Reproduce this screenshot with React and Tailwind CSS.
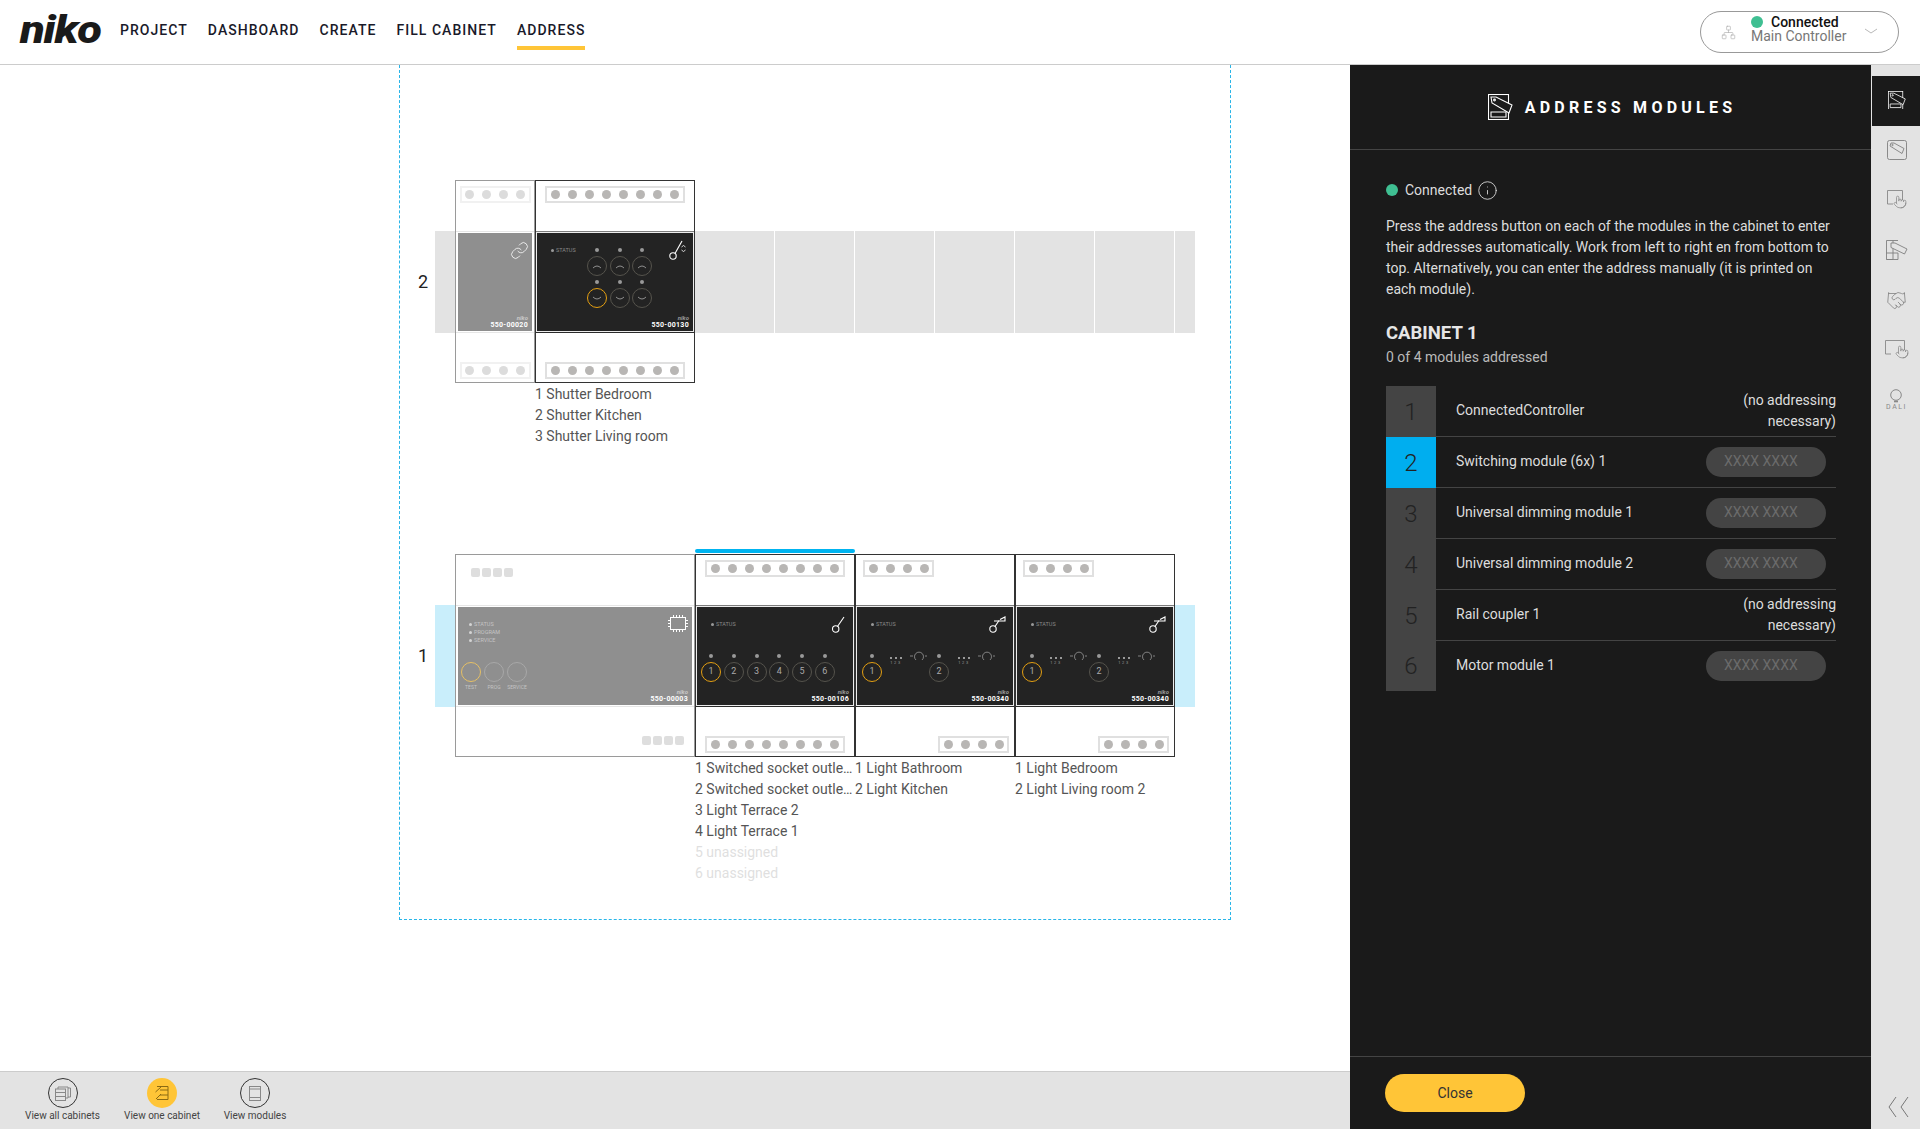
import React from "react";
import { Network, Link, Info, Handshake, Pointer } from "lucide-react";

const Pins = ({ n, faded }) => (
  <div className={`flex items-center justify-center gap-[8px] h-[17px] border-2 bg-white ${n === 8 ? "w-[140px]" : "w-[71px]"} ${faded ? "border-[#f1f1f1]" : "border-[#e0e0e0]"}`}>
    {Array.from({ length: n }).map((_, i) => (
      <span key={i} className={`w-[9px] h-[9px] rounded-full ${faded ? "bg-[#dcdcdc]" : "bg-[#b8b6b4]"}`} />
    ))}
  </div>
);

const Blocks = () => (
  <div className="flex gap-[2px]">
    {[0, 1, 2, 3].map((i) => (
      <span key={i} className="w-[9px] h-[9px] rounded-[2px] bg-[#dedede]" />
    ))}
  </div>
);

const KeyIcon = ({ kind }) => (
  <svg width="20" height="22" viewBox="0 0 20 22" fill="none" stroke="#fff" strokeWidth="1.1" className="absolute right-[5px] top-[7px]">
    {kind === "dim" && (
      <>
        <circle cx="5" cy="15" r="3.2" />
        <path d="M7 12.5 L11 6.5" />
        <path d="M6 7 H17 V3 L12 5.5" />
      </>
    )}
    {kind === "shutter" && (
      <>
        <circle cx="5" cy="16" r="3.2" />
        <path d="M7 13.5 L14 1" />
        <path d="M13.5 7 l2 -1.5 l2 1.5 M13.5 10 l2 1.5 l2 -1.5" strokeWidth="0.8" />
      </>
    )}
    {!kind && (
      <>
        <circle cx="7.7" cy="15" r="3.2" />
        <path d="M9.5 12.5 L16 3" />
      </>
    )}
  </svg>
);

const Chip = () => (
  <svg width="20" height="18" viewBox="0 0 20 18" fill="none" stroke="#fff" strokeWidth="1" className="absolute right-[4px] top-[8px]">
    <rect x="2.5" y="2.5" width="15" height="12" />
    <path d="M5.5 2.5V0 M8.5 2.5V0 M11.5 2.5V0 M14.5 2.5V0 M5.5 14.5V17 M8.5 14.5V17 M11.5 14.5V17 M14.5 14.5V17 M2.5 5.5H0 M2.5 8.5H0 M2.5 11.5H0 M17.5 5.5H20 M17.5 8.5H20 M17.5 11.5H20" />
  </svg>
);

const Chev = ({ up }) => (
  <svg width="10" height="5" viewBox="0 0 10 5" fill="none" stroke="#aaa" strokeWidth="0.8">
    <path d={up ? "M1 4 Q5 0 9 4" : "M1 1 Q5 5 9 1"} />
  </svg>
);

const Btn = ({ active, label, chev, grey, led = true, className = "" }) => (
  <div className={`w-5 flex flex-col items-center gap-[4px] ${className}`}>
    {led && <span className="w-[4px] h-[4px] rounded-full bg-[#999]" />}
    <span
      className={`w-5 h-5 rounded-full flex items-center justify-center text-[9px] text-[#aaa] ${
        active
          ? grey
            ? "border border-[#e6c065]"
            : "border-[1.5px] border-[#e39f12]"
          : grey
          ? "border border-[#a8a8a8]"
          : "border border-[#55534c]"
      }`}
    >
      {chev ? <Chev up={chev === "up"} /> : label}
    </span>
  </div>
);

const Status = ({ text, className = "", light }) => (
  <div className={`flex items-center gap-[2px] text-[5.5px] leading-[8px] ${light ? "text-[#c4c4c4]" : "text-[#888]"} ${className}`}>
    <span className={`w-[3px] h-[3px] rounded-full ${light ? "bg-[#d4d4d4]" : "bg-[#999]"}`} />
    <span>{text}</span>
  </div>
);

const Brand = ({ code, light }) => (
  <div className="absolute right-[4px] bottom-[2px] text-right">
    <div className={`italic font-bold text-[6px] leading-[7px] ${light ? "text-[#c9c9c9]" : "text-[#999]"}`}>niko</div>
    <div className="text-[7px] leading-[8px] font-bold tracking-[0.3px] text-white">{code}</div>
  </div>
);

const Dim = () => (
  <svg width="20" height="10" viewBox="0 0 20 10" fill="none" stroke="#999" strokeWidth="0.8">
    <path d="M1 5H4 M16 5h2" />
    <path d="M7 9 A4.5 4.5 0 1 1 13 9" />
  </svg>
);

const Labels = ({ items }) => (
  <div className="pt-px text-[14px] leading-[21px] text-[#555]">
    {items.map((t) => (
      <div key={t} className={`whitespace-nowrap overflow-hidden ${t.includes("unassigned") ? "text-[#dfdfdf]" : ""}`}>
        {t}
      </div>
    ))}
  </div>
);

const Module = ({ w, top, bottom, plate, labels, selected, faded, grey }) => (
  <div className={`${w} relative shrink-0`}>
    {selected && <div className="absolute left-0 right-0 -top-[5px] h-[4px] rounded-full bg-[#00b4f0]" />}
    <div className={`h-[203px] border ${faded ? "border-[#9a9a9a]" : "border-[#333]"}`}>
      <div className="h-[50px]">{top}</div>
      {grey ? (
        <div className="h-[102px] border-y border-[#e6e6e6] bg-white px-[2px] py-px">
          <div className="relative h-full w-full bg-[#8f8f8f]">{plate}</div>
        </div>
      ) : (
        <div className="h-[102px] border-y border-t-[#7d7d7d] border-b-[#2a2a2a] bg-[#ececec] p-[1px]">
          <div className="relative h-full w-full bg-[#232323]">{plate}</div>
        </div>
      )}
      <div className="h-[49px]">{bottom}</div>
    </div>
    {labels && <Labels items={labels} />}
  </div>
);

const Cap = ({ blue }) => (
  <div className={`w-5 h-[102px] mt-[51px] shrink-0 ${blue ? "bg-[#c9eefb]" : "bg-[#e3e3e3]"}`} />
);

const Slot = () => <div className="w-[80px] h-[102px] mt-[51px] shrink-0 bg-[#e3e3e3] border-r border-white" />;

const Num = ({ n }) => (
  <div className="w-[35px] h-[203px] shrink-0 flex items-center pl-[18px] text-[18px] text-[#222]">{n}</div>
);

const Rail2 = () => (
  <div className="flex items-start">
    <Num n="2" />
    <Cap />
    <Module
      w="w-[80px]"
      faded
      grey
      top={<div className="pt-[5px] flex justify-center"><Pins n={4} faded /></div>}
      bottom={<div className="pt-[29px] flex justify-center"><Pins n={4} faded /></div>}
      plate={
        <>
          <Link size={19} strokeWidth={1} color="#fff" className="absolute right-[3px] top-[8px]" />
          <Brand code="550-00020" light />
        </>
      }
    />
    <Module
      w="w-[160px]"
      labels={["1 Shutter Bedroom", "2 Shutter Kitchen", "3 Shutter Living room"]}
      top={<div className="pt-[5px] flex justify-center"><Pins n={8} /></div>}
      bottom={<div className="pt-[29px] flex justify-center"><Pins n={8} /></div>}
      plate={
        <>
          <Status text="STATUS" className="absolute left-[14px] top-[13px]" />
          <div className="absolute left-[50px] top-[15px] flex gap-[2.5px]">
            {[0, 1, 2].map((i) => <Btn key={i} chev="up" />)}
          </div>
          <div className="absolute left-[50px] top-[47px] flex gap-[2.5px]">
            <Btn chev="down" active />
            <Btn chev="down" />
            <Btn chev="down" />
          </div>
          <KeyIcon kind="shutter" />
          <Brand code="550-00130" />
        </>
      }
    />
    {[0, 1, 2, 3, 4, 5].map((i) => <Slot key={i} />)}
    <Cap />
  </div>
);

const DimInfo = ({ w }) => (
  <div className={`${w} flex justify-end items-start gap-[7px] text-[#999]`}>
    <div className="flex flex-col items-center">
      <div className="flex gap-[3px] mt-[3px]">
        {[0, 1, 2].map((i) => <span key={i} className="w-[2px] h-[2px] bg-[#999]" />)}
      </div>
      <div className="text-[4px] leading-[7px] tracking-[1.6px]">123</div>
    </div>
    <div className="-mt-[3px]"><Dim /></div>
  </div>
);

const DimPlate = ({ code }) => (
  <>
    <Status text="STATUS" className="absolute left-[14px] top-[13px]" />
    <div className="absolute left-[5px] top-[47px] flex">
      <Btn label="1" active />
      <DimInfo w="w-[47px]" />
      <Btn label="2" />
      <DimInfo w="w-[48px]" />
    </div>
    <KeyIcon kind="dim" />
    <Brand code={code} />
  </>
);

const Rail1 = () => (
  <div className="flex items-start">
    <Num n="1" />
    <Cap blue />
    <Module
      w="w-[240px]"
      faded
      grey
      top={<div className="pt-[13px] pl-[15px]"><Blocks /></div>}
      bottom={<div className="pt-[29px] pr-[10px] flex justify-end"><Blocks /></div>}
      plate={
        <>
          <div className="absolute left-[11px] top-[13px] flex flex-col">
            <Status text="STATUS" light />
            <Status text="PROGRAM" light />
            <Status text="SERVICE" light />
          </div>
          <div className="absolute left-[3px] top-[55px] flex gap-[3px]">
            {["TEST", "PROG", "SERVICE"].map((t, i) => (
              <div key={t} className="w-5 flex flex-col items-center">
                <Btn grey led={false} active={i === 0} />
                <span className="text-[5px] leading-[8px] mt-[1px] text-[#c4c4c4]">{t}</span>
              </div>
            ))}
          </div>
          <Chip />
          <Brand code="550-00003" light />
        </>
      }
    />
    <Module
      w="w-[160px]"
      selected
      labels={["1 Switched socket outle…", "2 Switched socket outle…", "3 Light Terrace 2", "4 Light Terrace 1", "5 unassigned", "6 unassigned"]}
      top={<div className="pt-[5px] flex justify-center"><Pins n={8} /></div>}
      bottom={<div className="pt-[29px] flex justify-center"><Pins n={8} /></div>}
      plate={
        <>
          <Status text="STATUS" className="absolute left-[14px] top-[13px]" />
          <div className="absolute left-[4px] top-[47px] flex gap-[2.75px]">
            {[1, 2, 3, 4, 5, 6].map((i) => <Btn key={i} label={i} active={i === 1} />)}
          </div>
          <KeyIcon />
          <Brand code="550-00106" />
        </>
      }
    />
    {[
      { code: "550-00340", labels: ["1 Light Bathroom", "2 Light Kitchen"] },
      { code: "550-00340", labels: ["1 Light Bedroom", "2 Light Living room 2"] },
    ].map((m) => (
      <Module
        key={m.labels[0]}
        w="w-[160px]"
        labels={m.labels}
        top={<div className="pt-[5px] pl-[7px]"><Pins n={4} /></div>}
        bottom={<div className="pt-[29px] pr-[5px] flex justify-end"><Pins n={4} /></div>}
        plate={<DimPlate code={m.code} />}
      />
    ))}
    <Cap blue />
  </div>
);

const AddressIcon = ({ size = 25, color = "#fff", bg = "#1a1a1a" }) => (
  <svg width={size} height={size * 1.04} viewBox="0 0 25 26" fill="none" stroke={color} strokeWidth="1.1">
    <rect x="0.5" y="0.5" width="20" height="25" />
    <path d="M3 18H18 V23 H3 Z" />
    <path d="M3 3 H8 L24 11 L21 19 L4 9 Z" fill={bg} />
    <circle cx="6.5" cy="6" r="0.9" />
  </svg>
);

const TagIcon = () => (
  <svg width="20" height="20" viewBox="0 0 20 20" fill="none" stroke="#808080" strokeWidth="0.9">
    <rect x="0.5" y="0.5" width="19" height="19" rx="2" />
    <path d="M4 3 H7 L17 8.5 L15 13.5 L3 6 Z" />
    <circle cx="5.5" cy="5" r="0.7" />
  </svg>
);

const TouchIcon = ({ w = 16 }) => (
  <svg width={w + 4} height="20" viewBox={`0 0 ${w + 4} 20`} fill="none" stroke="#888" strokeWidth="0.9">
    <path d={`M6 14 H0.5 V0.5 H${w - 0.5} V10`} />
    <Pointer x={w - 10} y="4" width="14" height="16" strokeWidth="1.3" color="#888" />
  </svg>
);

const TagModIcon = () => (
  <svg width="22" height="20" viewBox="0 0 22 20" fill="none" stroke="#808080" strokeWidth="0.9">
    <path d="M0.5 0.5 H7 V19.5 H0.5 Z M7 0.5 H12 M12 19.5 H0.5 M12 19.5 V13 H0.5" />
    <path d="M5 3 H9 L21 9 L18.5 14 L5 7.5 Z" fill="#e3e3e3" />
  </svg>
);

const SideTab = ({ children, active }) => (
  <div className={`h-[50px] pl-[2px] pb-[2px] flex items-center justify-center ${active ? "bg-[#1a1a1a] ml-px" : ""}`}>{children}</div>
);

const Row = ({ n, name, input, active, last }) => (
  <div className="flex">
    <div className={`w-[50px] ${last ? "h-[50px]" : "h-[51px]"} shrink-0 flex items-center justify-center text-[24px] font-light text-[#222] ${active ? "bg-[#00aeef]" : "bg-[#444]"}`}>
      {n}
    </div>
    <div className={`flex-1 flex items-center justify-between pl-5 ${last ? "" : "border-b border-[#444]"}`}>
      <span className="text-[14px] text-[#ddd] pb-[2px]">{name}</span>
      {input ? (
        <input
          readOnly
          placeholder="XXXX XXXX"
          className="w-[120px] h-[30px] mr-[10px] rounded-full bg-[#444] pl-[18px] pb-[2px] text-[14px] outline-none placeholder:text-[#6b6b6b]"
        />
      ) : (
        <span className="w-[120px] text-right text-[14px] leading-[21px] text-[#ddd]">(no addressing necessary)</span>
      )}
    </div>
  </div>
);

const CircleBtn = ({ label, active, children, w }) => (
  <div className={`${w} flex flex-col items-center`}>
    <div className={`w-[30px] h-[30px] rounded-full flex items-center justify-center ${active ? "bg-[#ffc537]" : "border border-[#333]"}`}>
      {children}
    </div>
    <span className="mt-[1px] text-[10px] leading-[14px] text-[#444] whitespace-nowrap">{label}</span>
  </div>
);

export default function App() {
  return (
    <div className="font-[family-name:Roboto,sans-serif] w-[1920px] h-[1129px] overflow-hidden flex flex-col bg-white">
      <header className="h-[65px] shrink-0 border-b border-[#ccc] flex items-center justify-between pl-[20px] pr-[21px]">
        <div className="flex items-center">
          <span className="w-[80px] text-[38px] leading-[38px] -mt-[4px] font-black italic tracking-[-1px] text-[#1a1a1a] scale-x-[1.19] origin-left">niko</span>
          <nav className="ml-[20px] -mt-[4px] flex gap-[20px] text-[14px] font-medium tracking-[1.04px] text-[#1a1a2a]">
            <span>PROJECT</span>
            <span>DASHBOARD</span>
            <span>CREATE</span>
            <span>FILL CABINET</span>
            <span className="relative">
              ADDRESS
              <span className="absolute left-0 right-0 top-[26px] h-[4px] bg-[#ffc537]" />
            </span>
          </nav>
        </div>
        <div className="w-[199px] h-[42px] rounded-full border border-[#999] flex items-center pl-[20px] pr-[20px]">
          <Network size={15} strokeWidth={1} color="#aaa" />
          <div className="ml-[15px] -mt-[7px] flex-1 text-[14px] leading-[14px]">
            <div className="flex items-center font-medium text-[#111]">
              <span className="w-3 h-3 rounded-full bg-[#3fbf92] mr-[8px]" />
              Connected
            </div>
            <div className="text-[#777]">Main Controller</div>
          </div>
          <svg width="14" height="8" viewBox="0 0 14 8" fill="none" stroke="#999" strokeWidth="0.7">
            <path d="M1 1 L7 5 L13 1" />
          </svg>
        </div>
      </header>

      <div className="flex-1 flex min-h-0">
        <div className="w-[1350px] flex flex-col">
          <main className="flex-1 min-h-0 overflow-hidden pl-[399px]">
            <div className="w-[832px] h-[855px] border-x border-b border-dashed border-[#28b5e8] pt-[115px]">
              <Rail2 />
              <div className="h-[107px]" />
              <Rail1 />
            </div>
          </main>
          <footer className="h-[58px] shrink-0 border-t border-[#ccc] bg-[#e3e3e3] pl-[25px] pt-[6px] flex gap-[24px]">
            <CircleBtn label="View all cabinets" w="w-[75px]">
              <svg width="16" height="15" viewBox="0 0 16 15" fill="none" stroke="#888" strokeWidth="1">
                <rect x="0.5" y="3" width="10" height="11.5" />
                <path d="M0.5 6.5H10.5 M0.5 10.5H10.5 M3 3V1H13V12H10.5 M13 2H15.5V11H13" />
              </svg>
            </CircleBtn>
            <CircleBtn label="View one cabinet" active w="w-[76px]">
              <svg width="14" height="14" viewBox="0 0 14 14" fill="none" stroke="#8a6a14" strokeWidth="1">
                <path d="M2 0.5H13V13.5H2 M5 4H13 M5 9H13 M0.5 6 L6 1 M1 13 L6 8" />
              </svg>
            </CircleBtn>
            <CircleBtn label="View modules" w="w-[62px]">
              <svg width="12" height="15" viewBox="0 0 12 15" fill="none" stroke="#888" strokeWidth="1">
                <rect x="0.5" y="0.5" width="11" height="14" />
                <path d="M0.5 3H11.5 M0.5 11.5H11.5" />
              </svg>
            </CircleBtn>
          </footer>
        </div>

        <aside className="w-[521px] bg-[#1a1a1a] flex flex-col">
          <div className="h-[85px] shrink-0 border-b border-[#444] flex items-center justify-center gap-[12px] pl-[3px]">
            <AddressIcon />
            <h1 className="mt-px text-[16px] font-bold tracking-[4.25px] text-white">ADDRESS MODULES</h1>
          </div>
          <div className="flex-1 pl-[36px] pr-[35px] pt-[30px] text-[#ddd]">
            <div className="h-5 flex items-center text-[14px]">
              <span className="w-3 h-3 rounded-full bg-[#3fbf92] mr-[7px]" />
              <span>Connected</span>
              <Info size={21} strokeWidth={1} color="#ddd" className="ml-[5px]" />
            </div>
            <p className="mt-[16px] text-[14px] leading-[21px]">
              Press the address button on each of the modules in the cabinet to enter their addresses automatically. Work from left to right en from bottom to top. Alternatively, you can enter the address manually (it is printed on each module).
            </p>
            <h2 className="mt-[21px] text-[18.5px] leading-[24px] font-bold text-[#e6e6e6]">CABINET 1</h2>
            <div className="mt-[2px] text-[14px] leading-[20px] text-[#bbb]">0 of 4 modules addressed</div>
            <div className="mt-[19px]">
              <Row n="1" name="ConnectedController" />
              <Row n="2" name="Switching module (6x) 1" input active />
              <Row n="3" name="Universal dimming module 1" input />
              <Row n="4" name="Universal dimming module 2" input />
              <Row n="5" name="Rail coupler 1" />
              <Row n="6" name="Motor module 1" input last />
            </div>
          </div>
          <div className="h-[73px] shrink-0 border-t border-[#444] pl-[35px] pt-[17px]">
            <button className="w-[140px] h-[38px] rounded-full bg-[#ffc537] text-[14px] text-[#333]">Close</button>
          </div>
        </aside>

        <div className="flex-1 bg-[#e3e3e3] pt-[11px] flex flex-col">
          <SideTab active><AddressIcon size={18} /></SideTab>
          <SideTab><TagIcon /></SideTab>
          <SideTab><TouchIcon /></SideTab>
          <SideTab><TagModIcon /></SideTab>
          <SideTab><Handshake size={21} strokeWidth={0.9} color="#808080" /></SideTab>
          <SideTab><TouchIcon w={20} /></SideTab>
          <SideTab>
            <div className="flex flex-col items-center">
              <svg width="12" height="14" viewBox="0 0 12 14" fill="none" stroke="#888" strokeWidth="1">
                <circle cx="6" cy="6" r="5.3" />
                <path d="M4 12.5H8" strokeWidth="1.6" />
              </svg>
              <span className="text-[7px] leading-[8px] tracking-[1.5px] text-[#888]">DALI</span>
            </div>
          </SideTab>
          <div className="mt-auto pb-[11px] pl-[6px] flex justify-center">
            <svg width="24" height="22" viewBox="0 0 24 22" fill="none" stroke="#777" strokeWidth="1">
              <path d="M9 1 L2 11 L9 21 M21 1 L14 11 L21 21" />
            </svg>
          </div>
        </div>
      </div>
    </div>
  );
}
